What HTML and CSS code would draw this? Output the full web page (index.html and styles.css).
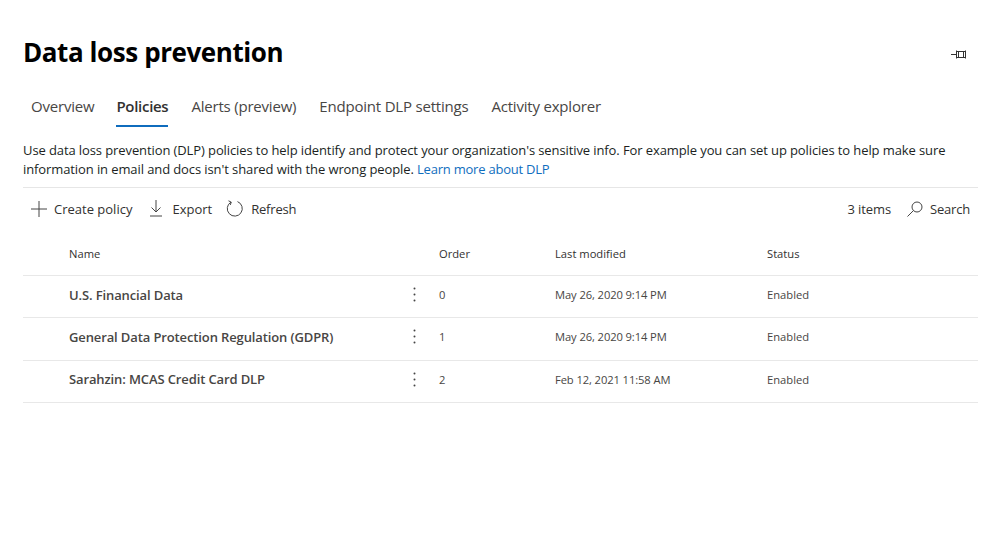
FILE: index.html
```html
<!DOCTYPE html>
<html lang="en">
<head>
<meta charset="utf-8">
<title>Data loss prevention</title>
<link rel="stylesheet" href="styles.css">
</head>
<body>
<main class="page">
  <header class="head">
    <h1 class="title">Data loss prevention</h1>
    <svg class="pin" width="16" height="10" viewBox="0 0 16 10" fill="none" stroke="#333" stroke-width="1"><path d="M0 4.500h5M5.500 0.500v8M5.500 1.500h9M5.500 7.500h9M7.500 1.500v6M12.500 1.500v6M14.500 0.500v8"/></svg>
  </header>
  <nav class="tabs">
    <a class="tab">Overview</a>
    <a class="tab active">Policies</a>
    <a class="tab">Alerts (preview)</a>
    <a class="tab">Endpoint DLP settings</a>
    <a class="tab">Activity explorer</a>
  </nav>
  <p class="intro">Use data loss prevention (DLP) policies to help identify and protect your organization's sensitive info. For example you can set up policies to help make sure information in email and docs isn't shared with the wrong people. <a class="link">Learn more about DLP</a></p>
  <div class="toolbar">
    <button class="tool tool-create">
      <svg width="16" height="16" viewBox="0 0 16 16" fill="none" stroke="#444" stroke-width="1"><path d="M8 0v16M0 8h16"/></svg>
      Create policy
    </button>
    <button class="tool tool-export">
      <svg width="12" height="17" viewBox="0 0 12 17" fill="none" stroke="#444" stroke-width="1"><path d="M6 0v12M1.500 7.500L6 12l4.500-4.500M0 16h12"/></svg>
      Export
    </button>
    <button class="tool tool-refresh">
      <svg width="17" height="17" viewBox="0 0 17 17" fill="none" stroke="#444" stroke-width="1"><path d="M5 2.100A7.500 7.500 0 1 0 11.500 1.600M2.500 0.800L5.300 2.200 4.200 5"/></svg>
      Refresh
    </button>
    <span class="count">3 items</span>
    <button class="tool tool-search">
      <svg width="16" height="16" viewBox="0 0 16 16" fill="none" stroke="#444" stroke-width="1"><circle cx="10" cy="6" r="5"/><path d="M6.500 9.500L0.500 15.500"/></svg>
      Search
    </button>
  </div>
  <div class="table">
    <div class="row row-head">
      <span>Name</span><span></span><span>Order</span><span>Last modified</span><span>Status</span>
    </div>
    <div class="row">
      <span class="name">U.S. Financial Data</span>
      <svg class="more" width="3" height="15" viewBox="0 0 3 15" fill="#444"><circle cx="1.500" cy="1.500" r="1"/><circle cx="1.500" cy="7.500" r="1"/><circle cx="1.500" cy="13.500" r="1"/></svg>
      <span>0</span><span class="date">May 26, 2020 9:14 PM</span><span>Enabled</span>
    </div>
    <div class="row">
      <span class="name">General Data Protection Regulation (GDPR)</span>
      <svg class="more" width="3" height="15" viewBox="0 0 3 15" fill="#444"><circle cx="1.500" cy="1.500" r="1"/><circle cx="1.500" cy="7.500" r="1"/><circle cx="1.500" cy="13.500" r="1"/></svg>
      <span>1</span><span class="date">May 26, 2020 9:14 PM</span><span>Enabled</span>
    </div>
    <div class="row">
      <span class="name">Sarahzin: MCAS Credit Card DLP</span>
      <svg class="more" width="3" height="15" viewBox="0 0 3 15" fill="#444"><circle cx="1.500" cy="1.500" r="1"/><circle cx="1.500" cy="7.500" r="1"/><circle cx="1.500" cy="13.500" r="1"/></svg>
      <span>2</span><span class="date">Feb 12, 2021 11:58 AM</span><span>Enabled</span>
    </div>
  </div>
</main>
</body>
</html>
```

FILE: styles.css
```css
* { box-sizing: border-box; }
html, body { margin: 0; height: 100%; background: #fff; overflow: hidden; }
body { font-family: "Open Sans", "Noto Sans", sans-serif; color: #323130; }
.page { width: 999px; height: 556px; padding: 27px 21px 0 23px; }
.head { display: flex; justify-content: space-between; align-items: center; height: 50px; }
.title { margin: 0; font-size: 26px; font-weight: 700; color: #000; letter-spacing: -0.42px; line-height: 50px; }
.pin { margin: 5px 11px 0 0; }
.tabs { display: flex; gap: 23px; height: 50px; padding-left: 8px; }
.tab { font-size: 15px; line-height: 20px; height: 50px; padding-top: 19px; letter-spacing: -0.2px; color: #484644; border-bottom: 2px solid transparent; }
.tab.active { font-weight: 600; color: #323130; letter-spacing: -0.3px; border-bottom-color: #0f6cbd; margin-left: -1px; }
.intro { margin: 14px 0 0; font-size: 13px; line-height: 18.5px; color: #201f1e; letter-spacing: -0.1px; width: 940px; }
.link { color: #106ebe; letter-spacing: -0.22px; }
.toolbar { display: flex; align-items: center; height: 44px; margin-top: 9px; border-top: 1px solid #e6e6e6; padding: 0 8px 2px; }
.tool { display: flex; align-items: center; gap: 7px; border: 0; background: none; padding: 0; font: inherit; font-size: 13px; font-weight: 500; letter-spacing: 0; color: #323130; }
.tool-export { margin-left: 18px; gap: 10px; }
.tool-refresh { margin-left: 14px; gap: 8px; letter-spacing: -0.2px; }
.count { margin-left: auto; font-size: 13px; font-weight: 500; letter-spacing: -0.1px; }
.tool-search { margin-left: 16px; gap: 7px; letter-spacing: -0.2px; }
.table { font-size: 11.2px; }
.row { display: grid; grid-template-columns: 370px 0 116px 212px 1fr; align-items: center; height: 42.3px; padding-left: 46px; padding-bottom: 4px; border-bottom: 1px solid #e8e8e8; color: #484644; }
.row-head { height: 45px; padding-top: 0; padding-bottom: 0; font-weight: 500; color: #323130; }
.name { font-size: 13px; font-weight: 600; color: #484644; letter-spacing: -0.12px; }
.date { letter-spacing: -0.1px; }
.more { justify-self: start; margin-left: -26px; }
```
